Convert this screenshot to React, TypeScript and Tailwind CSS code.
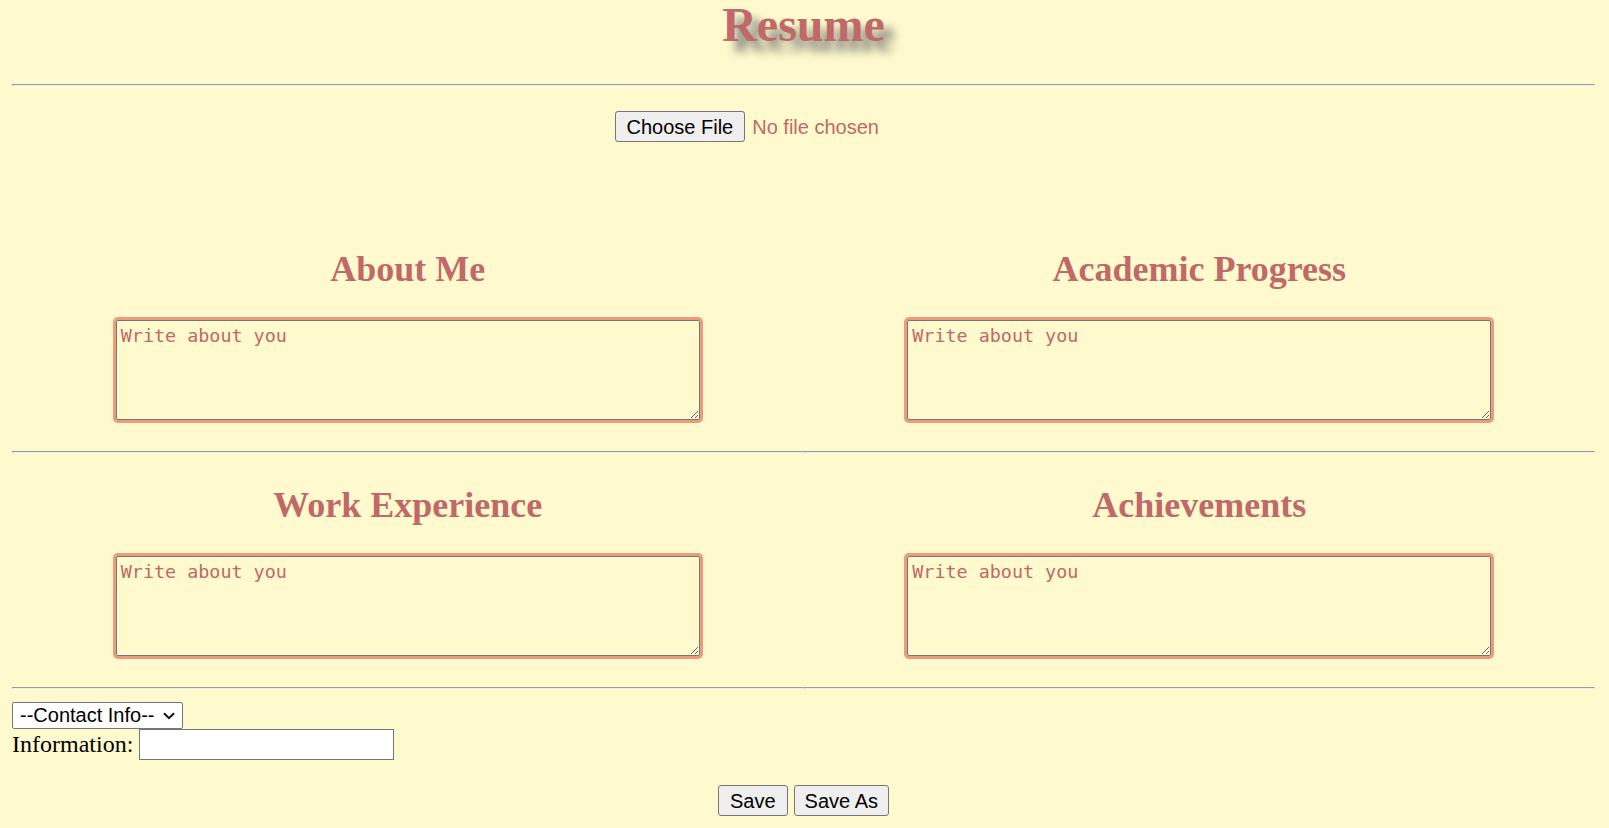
import { useState } from "react";

const sections = ["About Me", "Academic Progress", "Work Experience", "Achievements"];

// hr with the browser's inset look
const Rule = () => (
  <div className="h-[2px] w-full border border-t-[#9a9a9a] border-l-[#9a9a9a] border-b-[#eeeeee] border-r-[#eeeeee]" />
);

const Section = ({ title }: { title: string }) => {
  const [text, setText] = useState("");

  return (
    <div className="flex flex-col items-center">
      <h2 className="pt-[32px] text-[36px] leading-[41px] font-bold text-[#c16868]">
        {title}
      </h2>
      <textarea
        value={text}
        onChange={(e) => setText(e.target.value)}
        placeholder="Write about you"
        className="mt-[30px] w-[584px] h-[100px] border border-[#767676] rounded-[2px] ring-[3px] ring-[#ec9c7c] bg-transparent pl-[4px] pr-[3px] pt-[4px] font-['DejaVu_Sans_Mono',monospace] text-[18.4px] leading-[21px] text-[#c16868] placeholder:text-[#c16868] outline-none"
      />
      <div className="mt-[31px] w-full">
        <Rule />
      </div>
    </div>
  );
};

const App = () => {
  const [info, setInfo] = useState("");

  return (
    <div className="min-h-screen bg-[#fffacd] pl-[12px] pr-[14px] font-['Liberation_Serif',serif] text-black">
      <h1 className="text-center text-[48px] leading-[50px] font-bold text-[#c16868] [text-shadow:10px_10px_10px_#777]">
        Resume
      </h1>

      <div className="mt-[34px]">
        <Rule />
      </div>

      {/* file picker */}
      <div className="mx-auto mt-[25px] flex h-[31px] w-[378px] items-center gap-[7px] font-['Liberation_Sans',sans-serif] text-[20px]">
        <button className="h-[31px] rounded-[3px] border border-[#767676] bg-[#efefef] px-[11px] pt-[2px] leading-[27px] text-black">
          Choose File
        </button>
        <span className="pt-[1px] text-[#c16868]">No file chosen</span>
      </div>

      <div className="mt-[75px] grid grid-cols-2">
        {sections.map((s) => (
          <Section key={s} title={s} />
        ))}
      </div>

      {/* contact */}
      <div className="relative mt-[13px] h-[27px] w-[171px]">
        <select className="h-full w-full appearance-none rounded-[2px] border border-[#767676] bg-white pl-[7px] font-['Liberation_Sans',sans-serif] text-[20px] leading-[25px] text-black outline-none">
          <option>--Contact Info--</option>
          <option>Email</option>
          <option>Phone</option>
          <option>Address</option>
        </select>
        <svg
          className="pointer-events-none absolute right-[8px] top-[10px] h-[8px] w-[12px]"
          viewBox="0 0 12 8"
        >
          <path d="M1 1.2l5 5 5-5" stroke="#111" strokeWidth="2" fill="none" />
        </svg>
      </div>

      <div className="flex h-[31px] items-center">
        <label className="text-[24px] leading-[27px]">Information:</label>
        <input
          value={info}
          onChange={(e) => setInfo(e.target.value)}
          className="ml-[6px] h-[31px] w-[255px] border border-[#767676] bg-white px-[3px] font-['Liberation_Sans',sans-serif] text-[20px] outline-none"
        />
      </div>

      <div className="mt-[25px] flex justify-center gap-[6px] font-['Liberation_Sans',sans-serif] text-[20px]">
        <button className="h-[31px] rounded-[3px] border border-[#767676] bg-[#efefef] px-[11px] pt-[2px] leading-[27px]">
          Save
        </button>
        <button className="h-[31px] rounded-[3px] border border-[#767676] bg-[#efefef] px-[10px] pt-[2px] leading-[27px]">
          Save As
        </button>
      </div>
    </div>
  );
};

export default App;
